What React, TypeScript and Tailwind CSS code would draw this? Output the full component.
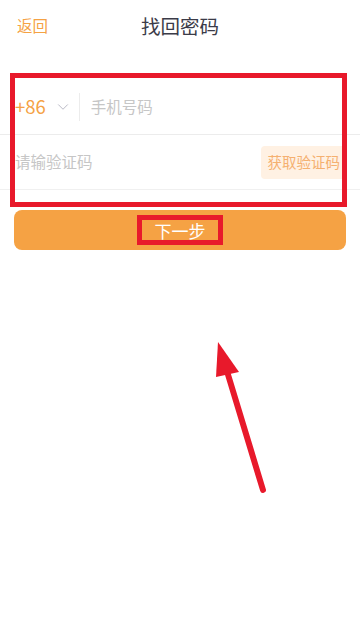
import { ChevronDown } from "lucide-react";

const font = { fontFamily: '"Noto Sans CJK SC", "Noto Sans", sans-serif' };

export default function App() {
  return (
    <main className="relative w-[360px] h-[619px] bg-white overflow-hidden" style={font}>
      {/* header */}
      <header className="relative h-[52px] flex items-center">
        <span className="ml-[17px] text-[15.5px] text-[#f5a244]">返回</span>
        <h1 className="absolute left-0 right-0 text-center text-[19.5px] text-[#3b3b48]">找回密码</h1>
      </header>

      {/* form */}
      <div className="mt-[28px]">
        <div className="h-[55px] flex items-center border-b border-[#ececec]">
          <span className="ml-[15px] text-[18.5px] text-[#f5a244]">+86</span>
          <ChevronDown className="ml-[8px] w-[18px] h-[18px] text-[#b8b8c4]" strokeWidth={1.3} />
          <div className="ml-[7px] w-px h-[28px] bg-[#ececec]" />
          <span className="ml-[11px] text-[15.5px] text-[#c6c6c6]">手机号码</span>
        </div>
        <div className="h-[55px] flex items-center justify-between border-b border-[#f0f0f0]">
          <span className="ml-[15px] text-[15.5px] text-[#c6c6c6]">请输验证码</span>
          <div className="mr-[13px] h-[33px] px-[7px] flex items-center rounded-[4px] bg-[#fff1e3] text-[14.5px] text-[#f5b070]">
            获取验证码
          </div>
        </div>
      </div>

      <button className="mt-[20px] ml-[14px] w-[332px] h-[40px] rounded-lg bg-[#f5a244] flex items-center justify-center">
        <span className="w-[86px] h-[30px] border-[5px] border-[#e8192b] flex items-center justify-center text-[17px] text-white leading-none">
          下一步
        </span>
      </button>

      {/* annotation */}
      <div className="absolute left-[10px] top-[73px] w-[337px] h-[134px] border-[5px] border-[#e8192b]" />
      <svg className="absolute left-0 top-0" width="360" height="619">
        <line x1="263" y1="490" x2="226" y2="368" stroke="#e8192b" strokeWidth="6" strokeLinecap="round" />
        <polygon points="218,342 216,377 239,372" fill="#e8192b" />
      </svg>
    </main>
  );
}
